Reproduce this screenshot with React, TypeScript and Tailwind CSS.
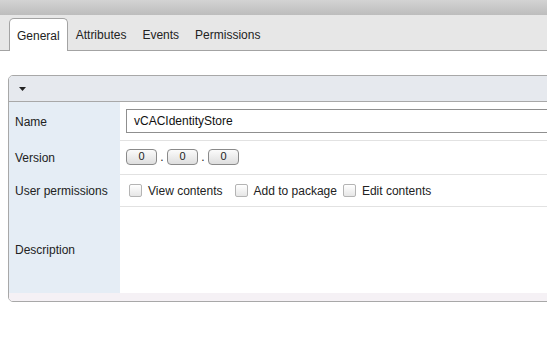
import React from "react";

const tabs = ["General", "Attributes", "Events", "Permissions"];

const Checkbox = ({ label, className }: { label: string; className?: string }) => (
  <label className={"flex items-center " + (className ?? "")}>
    <span className="w-[13px] h-[13px] rounded-[2px] border border-[#b4b4b4] bg-gradient-to-b from-white to-[#e6e6e6]" />
    <span className="ml-[6px] text-[#222]">{label}</span>
  </label>
);

const VersionBox = () => (
  <div className="w-[31px] h-[16px] rounded-[4px] border border-[#8a8a8a] bg-gradient-to-b from-[#fbfbfb] to-[#dedede] flex items-center justify-center text-[11px] text-[#222]">
    0
  </div>
);

export default function App() {
  return (
    <div className="w-[547px] h-[354px] overflow-hidden bg-white text-[12px] text-[#222] font-['Liberation_Sans',Arial,sans-serif]">
      {/* top strip */}
      <div className="h-[15px] bg-gradient-to-b from-[#d3d3d3] to-[#bdbdbd]" />

      {/* tab bar */}
      <div className="h-[36px] bg-[#e7e7e7] border-b border-[#a3a3a3] flex items-end pl-[9px]">
        {tabs.map((t, i) =>
          i === 0 ? (
            <div
              key={t}
              className="h-[33px] -mb-px px-[7px] pt-[2px] flex items-center bg-white border border-b-0 border-[#a3a3a3] rounded-t-[5px]"
            >
              {t}
            </div>
          ) : (
            <div key={t} className="h-[33px] px-[8px] pt-[2px] flex items-center">
              {t}
            </div>
          )
        )}
      </div>

      {/* panel */}
      <div className="mt-[24px] ml-[8px] w-[600px] border border-[#a8a8a8] rounded-[5px] overflow-hidden">
        <div className="h-[26px] bg-[#e6e9ee] border-b border-[#a8a8a8] flex items-center pl-[10px]">
          <svg width="7" height="4" viewBox="0 0 7 4">
            <path d="M0 0h7L3.5 4z" fill="#222" />
          </svg>
        </div>

        <div className="flex">
          <div className="w-[111px] h-[39px] bg-[#e5edf5] flex items-center pl-[6px]">Name</div>
          <div className="flex-1 border-b border-[#e2e2e2] flex items-center pl-[6px]">
            <div className="w-full h-[24px] border border-[#8f8f8f] flex items-center pl-[7px] text-[#111]">
              vCACIdentityStore
            </div>
          </div>
        </div>

        <div className="flex">
          <div className="w-[111px] h-[34px] bg-[#e5edf5] flex items-center pl-[6px]">Version</div>
          <div className="flex-1 border-b border-[#e2e2e2] flex items-center pl-[6px] pb-[2px]">
            <VersionBox />
            <span className="w-[10px] text-center">.</span>
            <VersionBox />
            <span className="w-[10px] text-center">.</span>
            <VersionBox />
          </div>
        </div>

        <div className="flex">
          <div className="w-[111px] h-[32px] bg-[#e5edf5] flex items-center pl-[6px]">User permissions</div>
          <div className="flex-1 border-b border-[#e2e2e2] flex items-center pl-[9px]">
            <Checkbox label="View contents" />
            <Checkbox label="Add to package" className="ml-[12px]" />
            <Checkbox label="Edit contents" className="ml-[6px]" />
          </div>
        </div>

        <div className="flex">
          <div className="w-[111px] h-[86px] bg-[#e5edf5] flex items-center pl-[6px]">Description</div>
          <div className="flex-1" />
        </div>

        <div className="h-[8px] bg-[#f5f1f5]" />
      </div>
    </div>
  );
}
